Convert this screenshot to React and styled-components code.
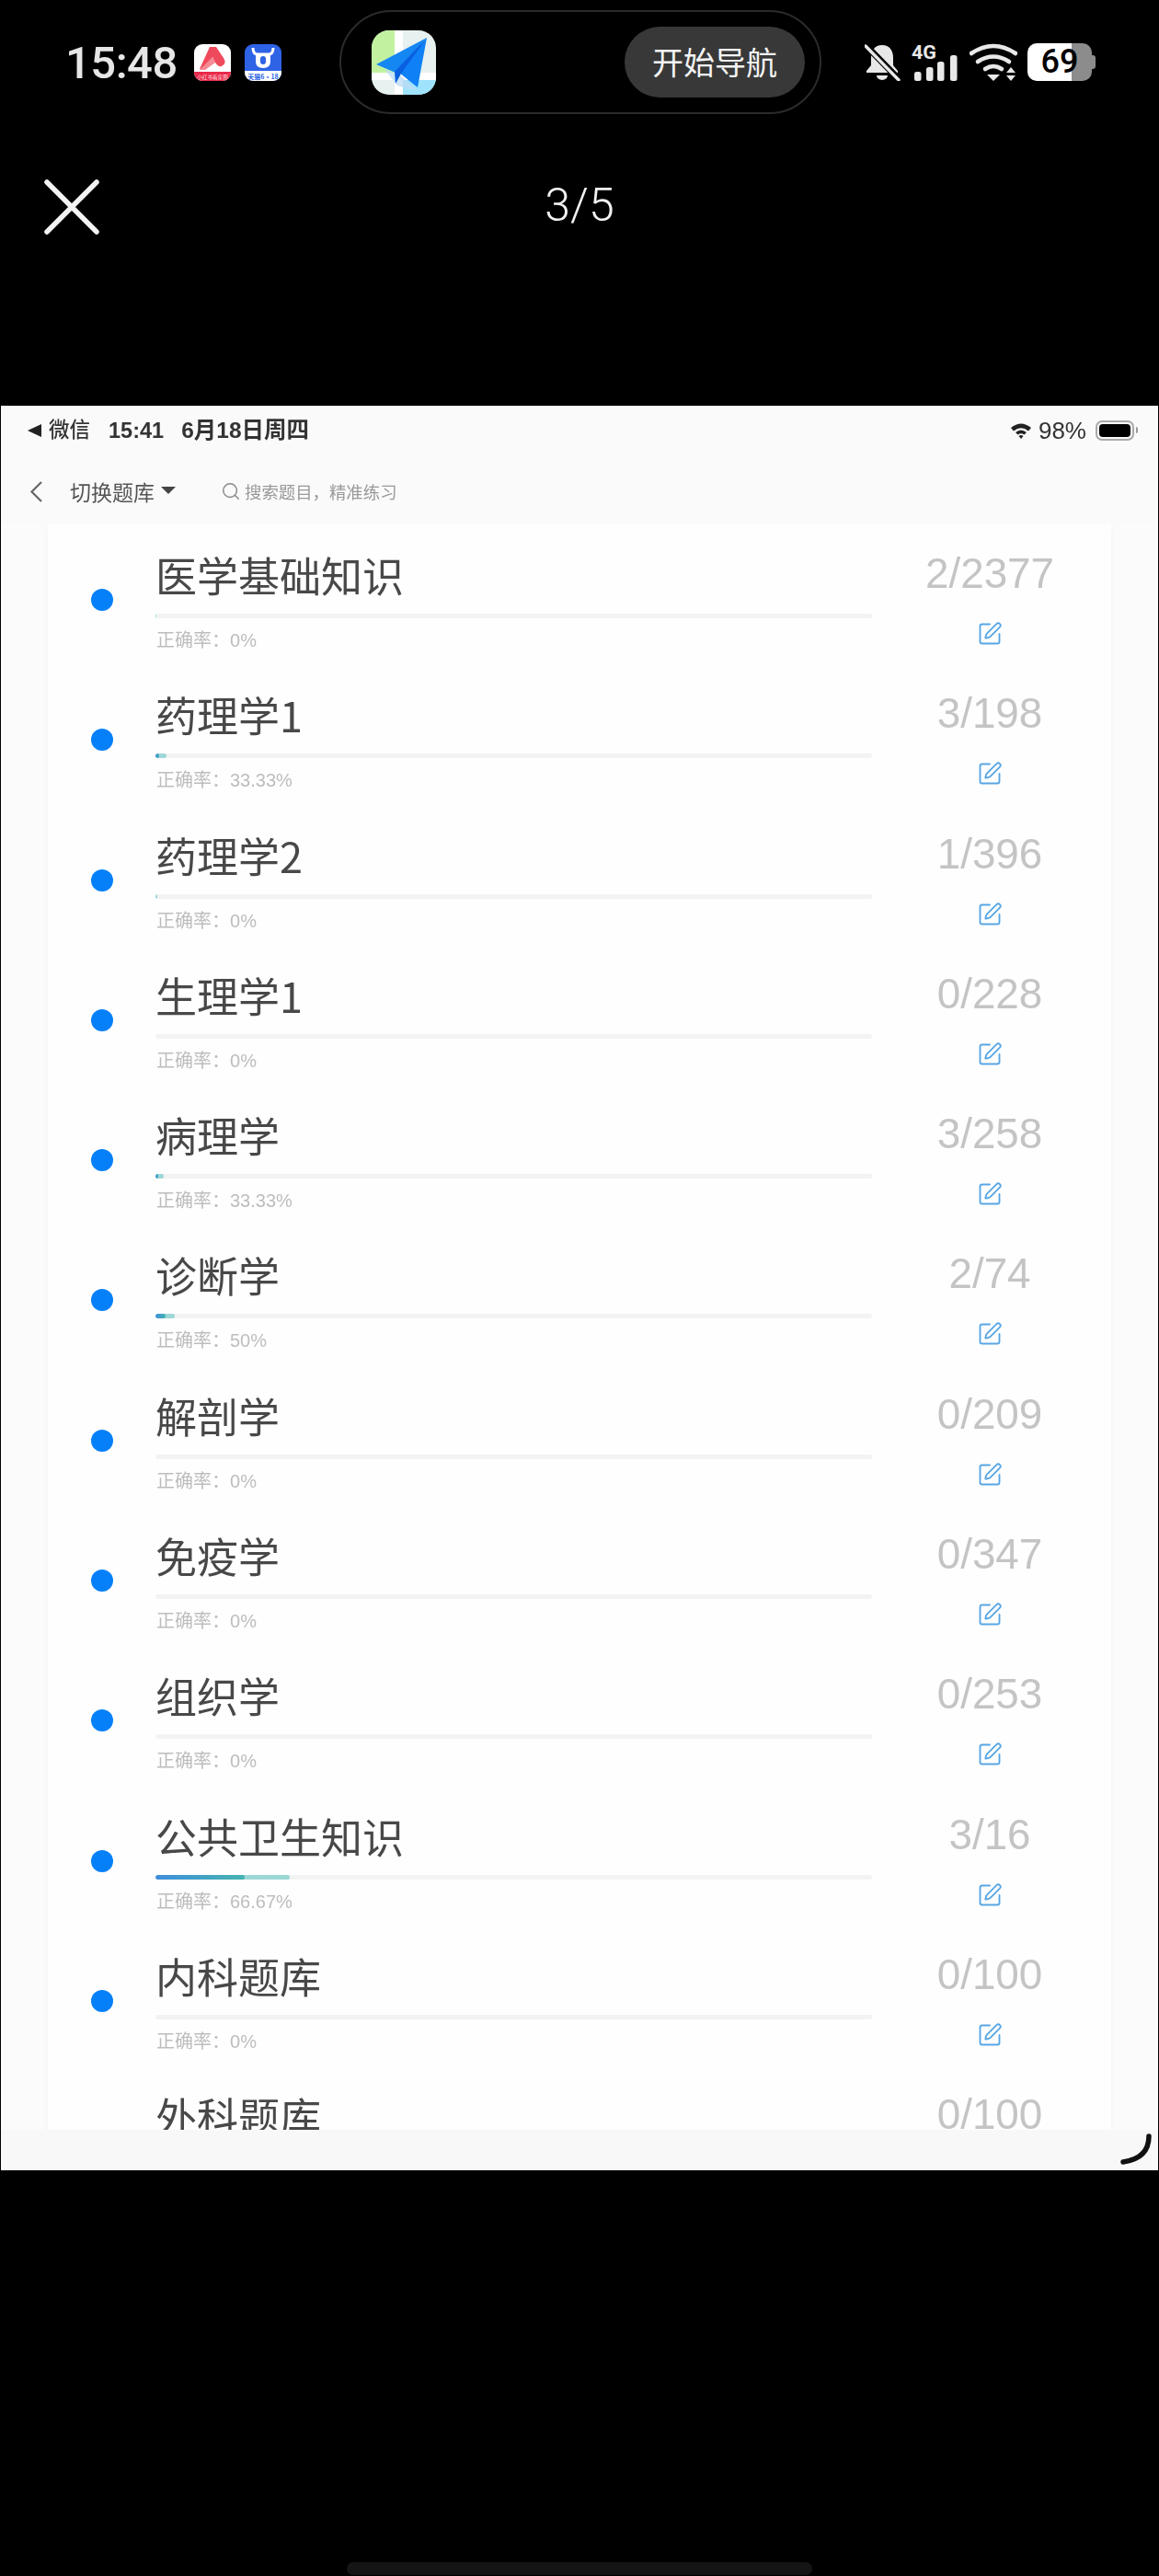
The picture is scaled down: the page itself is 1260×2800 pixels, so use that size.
import React from 'react';
import styled, { createGlobalStyle } from 'styled-components';
import { SquarePen, Search } from 'lucide-react';

const Global = createGlobalStyle`
  html, body { margin: 0; padding: 0; background: #000; }
  * { box-sizing: border-box; }
`;

const cjk = `"Noto Sans CJK SC", sans-serif`;
const latin = `"Liberation Sans", "Noto Sans CJK SC", sans-serif`;

const Page = styled.div`
  width: 1260px;
  height: 2800px;
  background: #000;
  display: flex;
  flex-direction: column;
  overflow: hidden;
`;

const StatusBar = styled.div`
  height: 124px;
  padding: 11px 0 0 71px;
  display: flex;
  align-items: flex-start;
`;

const Clock = styled.div`
  width: 120px;
  margin-top: 31px;
  font: 500 49px/54px Roboto, sans-serif;
  letter-spacing: -0.5px;
  color: #e6e6e6;
  white-space: nowrap;
`;

const AppBadges = styled.div`
  display: flex;
  gap: 15px;
  margin: 37px 0 0 20px;
`;

const Badge = styled.svg`
  width: 40px;
  height: 40px;
  display: block;
`;

const Island = styled.div`
  width: 524px;
  height: 113px;
  margin-left: 63px;
  border: 2px solid #2b2b2b;
  border-radius: 57px;
  display: flex;
  align-items: center;
  justify-content: space-between;
  padding: 0 15px 0 33px;
`;

const MapIcon = styled.svg`
  width: 70px;
  height: 70px;
  display: block;
`;

const NavButton = styled.div`
  width: 196px;
  height: 77px;
  margin-right: 1px;
  border-radius: 39px;
  background: #383838;
  color: #f4f4f4;
  font: 400 34px/75px ${cjk};
  text-align: center;
`;

const Indicators = styled.div`
  display: flex;
  align-items: center;
  height: 41px;
  margin: 36px 0 0 47px;
`;

const IconSvg = styled.svg`
  display: block;
  height: 41px;
  width: ${(p) => p.$w}px;
  margin-right: ${(p) => p.$gap}px;
`;

const Battery = styled.div`
  position: relative;
  width: 70px;
  height: 41px;
  border-radius: 10px;
  background: linear-gradient(90deg, #fff 0 48px, #8c8c8c 48px 100%);
  color: #000;
  font: 500 36px/41px Roboto, sans-serif;
  text-align: center;
  &::after {
    content: '';
    position: absolute;
    right: -4px;
    top: 13px;
    width: 4px;
    height: 15px;
    border-radius: 0 3px 3px 0;
    background: #8c8c8c;
  }
`;

const ViewerBar = styled.div`
  height: 317px;
  padding-top: 71px;
  display: grid;
  grid-template-columns: 1fr auto 1fr;
  align-items: start;
`;

const CloseIcon = styled.svg`
  width: 60px;
  height: 60px;
  margin-left: 48px;
  display: block;
`;

const PageCount = styled.div`
  font: 300 50px/56px Roboto, sans-serif;
  color: #f2f2f2;
`;

const Screen = styled.div`
  height: 1918px;
  margin: 0 1px;
  background: #fbfbfb;
  display: flex;
  flex-direction: column;
  position: relative;
  overflow: hidden;
  filter: blur(0.55px);
`;

const PhoneStatus = styled.div`
  height: 54px;
  padding: 0 0 0 29px;
  display: flex;
  align-items: center;
  background: #fafafa;
  color: #333;
  font: 500 22.5px/28px ${latin};
`;

const BackTriangle = styled.span`
  width: 0;
  height: 0;
  border-style: solid;
  border-width: 7.5px 15px 7.5px 0;
  border-color: transparent #222 transparent transparent;
  margin-right: 8px;
`;

const PhoneTime = styled.span`
  margin-left: 20px;
  font-size: 23.5px;
  font-weight: 700;
`;

const PhoneDate = styled.span`
  margin-left: 19px;
  font-size: 24.5px;
  font-weight: 700;
`;

const PhoneRight = styled.div`
  margin-left: auto;
  margin-right: 26px;
  display: flex;
  align-items: center;
  gap: 7px;
  font: 400 26px/28px ${latin};
  color: #333;
`;

const PhoneBattery = styled.div`
  position: relative;
  width: 42px;
  height: 22px;
  margin-left: 3px;
  border: 2px solid #aaa;
  border-radius: 7px;
  padding: 2px;
  &::before {
    content: '';
    display: block;
    height: 100%;
    border-radius: 4px;
    background: #000;
  }
  &::after {
    content: '';
    position: absolute;
    right: -6px;
    top: 5px;
    width: 2px;
    height: 7px;
    background: #999;
    border-radius: 0 2px 2px 0;
  }
`;

const NavBar = styled.div`
  height: 75px;
  padding: 3px 0 0 31px;
  display: flex;
  align-items: center;
  background: #fafafa;
`;

const NavLabel = styled.span`
  margin-left: 29px;
  font: 400 23px/30px ${cjk};
  color: #555;
`;

const Caret = styled.span`
  width: 0;
  height: 0;
  margin-left: 7px;
  margin-top: -2px;
  border-style: solid;
  border-width: 8px 8px 0 8px;
  border-color: #444 transparent transparent transparent;
`;

const SearchBox = styled.div`
  margin-left: 49px;
  display: flex;
  align-items: center;
  gap: 4px;
  font: 400 18.4px/26px ${cjk};
  color: #999;
`;

const List = styled.div`
  flex: 1;
  min-height: 0;
  overflow: hidden;
  padding: 0 51px;
`;

const Card = styled.div`
  background: #fefefe;
  padding-top: 30px;
  box-shadow: 0 0 8px rgba(0, 0, 0, 0.035);
`;

const Row = styled.div`
  height: 152.3px;
  display: grid;
  grid-template-columns: 117px 779px 256px;
  align-items: start;
`;

const Dot = styled.span`
  display: block;
  width: 24px;
  height: 24px;
  margin: 40px 0 0 47px;
  border-radius: 50%;
  background: #0580f8;
`;

const Main = styled.div`
  display: flex;
  flex-direction: column;
`;

const Title = styled.div`
  font: 400 45px/50px ${cjk};
  color: #484848;
  white-space: nowrap;
`;

const Track = styled.div`
  position: relative;
  height: 5px;
  margin-top: 17px;
  border-radius: 3px;
  background: #f3f3f3;
  overflow: hidden;
`;

const Done = styled.div`
  position: absolute;
  left: 0;
  top: 0;
  bottom: 0;
  border-radius: 3px;
  background: linear-gradient(90deg, #a4d6e0, #9ad8d4);
`;

const Correct = styled.div`
  position: absolute;
  left: 0;
  top: 0;
  bottom: 0;
  border-radius: 3px;
  background: linear-gradient(90deg, #3f8edb, #46b4b2);
`;

const Rate = styled.div`
  margin: 12px 0 0 1px;
  font: 400 20px/24px ${latin};
  color: #bdbdbd;
`;

const Side = styled.div`
  margin-top: -2px;
  display: flex;
  flex-direction: column;
  align-items: center;
`;

const Count = styled.div`
  font: 400 45.8px/52px ${latin};
  color: #c4c4c4;
`;

const EditButton = styled.div`
  margin-top: 25px;
  color: #58a6e4;
  line-height: 0;
`;

const BottomBar = styled.div`
  height: 44px;
  flex: none;
  background: #f8f8f8;
`;

const Spinner = styled.svg`
  position: absolute;
  right: 6px;
  bottom: 5px;
  width: 36px;
  height: 36px;
`;

const HomeIndicator = styled.div`
  width: 506px;
  height: 14px;
  margin: auto auto 1px;
  border-radius: 7px;
  background: #151515;
`;

const subjects = [
  { name: '医学基础知识', done: 2, total: 2377, rate: 0 },
  { name: '药理学1', done: 3, total: 198, rate: 33.33 },
  { name: '药理学2', done: 1, total: 396, rate: 0 },
  { name: '生理学1', done: 0, total: 228, rate: 0 },
  { name: '病理学', done: 3, total: 258, rate: 33.33 },
  { name: '诊断学', done: 2, total: 74, rate: 50 },
  { name: '解剖学', done: 0, total: 209, rate: 0 },
  { name: '免疫学', done: 0, total: 347, rate: 0 },
  { name: '组织学', done: 0, total: 253, rate: 0 },
  { name: '公共卫生知识', done: 3, total: 16, rate: 66.67 },
  { name: '内科题库', done: 0, total: 100, rate: 0 },
  { name: '外科题库', done: 0, total: 100, rate: 0 },
];

const RedBadge = () => (
  <Badge viewBox="0 0 40 40">
    <defs>
      <clipPath id="rb"><rect width="40" height="40" rx="9" /></clipPath>
    </defs>
    <g clipPath="url(#rb)">
      <rect width="40" height="40" fill="#fff" />
      <path d="M6 27 L17 3 H24 L32 15 Q36 21 30 24 Q26 25 23 20 L20 14 L13 27 Z" fill="#ef4a5c" />
      <path d="M20 14 L23 20 L12 28 H6 Z" fill="#f58a94" />
      <rect y="30" width="40" height="10" fill="#e9294a" />
      <text x="20" y="37.5" fontSize="5.6" fill="#ffd5da" textAnchor="middle" fontFamily="Noto Sans CJK SC">小红书看家圈</text>
    </g>
  </Badge>
);

const BlueBadge = () => (
  <Badge viewBox="0 0 40 40">
    <defs>
      <clipPath id="bb"><rect width="40" height="40" rx="9" /></clipPath>
    </defs>
    <g clipPath="url(#bb)">
      <rect width="40" height="40" fill="#2e63e6" />
      <rect y="29" width="40" height="11" fill="#fff" />
      <path d="M9 4 Q9 10 13 11 H27 Q31 10 31 4" fill="none" stroke="#fff" strokeWidth="3" />
      <path d="M12 10 H28 V19 Q28 26 20 26 Q12 26 12 19 Z" fill="#fff" />
      <rect x="17" y="13" width="6" height="9" rx="3" fill="#2e63e6" />
      <text x="20" y="37.6" fontSize="7" fontWeight="700" fill="#2e63e6" textAnchor="middle" fontFamily="Noto Sans CJK SC">天猫6·18</text>
    </g>
  </Badge>
);

const Amap = () => (
  <MapIcon viewBox="0 0 70 70">
    <defs>
      <clipPath id="am"><rect width="70" height="70" rx="19" /></clipPath>
    </defs>
    <g clipPath="url(#am)">
      <rect width="70" height="70" fill="#e7f1f0" />
      <rect width="25" height="46" fill="#c2f2a0" />
      <rect x="25" width="9" height="70" fill="#fff" />
      <rect y="46" width="70" height="8" fill="#fff" />
      <rect x="34" y="54" width="36" height="16" fill="#9fe2fb" />
      <polygon points="14,42 28,60 50,66 30,48" fill="#bcdcf5" opacity=".8" />
      <polygon points="60,8 5,37 26,46" fill="#1487f2" />
      <polygon points="60,8 30,46 50,62" fill="#0f80f5" />
      <polygon points="60,8 25,45 26,58 32,47" fill="#0a5fe0" />
    </g>
  </MapIcon>
);

const Bell = () => (
  <IconSvg $w={39} $gap={12} viewBox="0 0 39 41">
    <path d="M19 2c-8 0-12 6-12 14v8l-5 6v2h34v-2l-5-6v-8C31 8 27 2 19 2z" fill="#e8e8e8" />
    <path d="M13 35a6 5 0 0 0 12 0z" fill="#e8e8e8" />
    <path d="M1 2 L37 39" stroke="#000" strokeWidth="7" />
    <path d="M1 3 L37 40" stroke="#e8e8e8" strokeWidth="3.4" strokeLinecap="round" />
  </IconSvg>
);

const Signal = () => (
  <IconSvg $w={50} $gap={13} viewBox="0 0 50 41">
    <text x="0" y="17" fontSize="20" fontWeight="700" fontFamily="Roboto" fill="#e8e8e8" textLength="27" lengthAdjust="spacingAndGlyphs">4G</text>
    <rect x="3" y="31" width="7.5" height="10" rx="2.5" fill="#e8e8e8" />
    <rect x="16" y="26" width="7.5" height="15" rx="2.5" fill="#e8e8e8" />
    <rect x="28" y="20" width="7.5" height="21" rx="2.5" fill="#e8e8e8" />
    <rect x="42" y="13" width="7.5" height="28" rx="2.5" fill="#e8e8e8" />
  </IconSvg>
);

const Wifi = () => (
  <IconSvg $w={52} $gap={11} viewBox="0 0 52 41">
    <g fill="none" stroke="#e8e8e8" strokeWidth="4.6" strokeLinecap="round">
      <path d="M2 11 Q26 -5 50 11" />
      <path d="M9 20 Q26 9 43 20" />
      <path d="M17 28 Q26 22 35 28" />
    </g>
    <polygon points="19,34 33,34 26,41" fill="#e8e8e8" />
    <polygon points="40,32 50,32 45,26" fill="#e8e8e8" />
    <polygon points="40,35 50,35 45,41" fill="#e8e8e8" />
  </IconSvg>
);

export default function App() {
  return (
    <Page>
      <Global />
      <StatusBar>
        <Clock>15:48</Clock>
        <AppBadges>
          <RedBadge />
          <BlueBadge />
        </AppBadges>
        <Island>
          <Amap />
          <NavButton>开始导航</NavButton>
        </Island>
        <Indicators>
          <Bell />
          <Signal />
          <Wifi />
          <Battery>69</Battery>
        </Indicators>
      </StatusBar>

      <ViewerBar>
        <CloseIcon viewBox="0 0 60 60">
          <path d="M3 3 L57 57 M57 3 L3 57" stroke="#f4f4f4" strokeWidth="5.5" strokeLinecap="round" />
        </CloseIcon>
        <PageCount>3/5</PageCount>
      </ViewerBar>

      <Screen>
        <PhoneStatus>
          <BackTriangle />
          微信
          <PhoneTime>15:41</PhoneTime>
          <PhoneDate>6月18日周四</PhoneDate>
          <PhoneRight>
            <svg width="24" height="18" viewBox="0 0 24 18">
              <path d="M1 6 Q12 -3 23 6 L20 9.5 Q12 3 4 9.5 Z M6 11 Q12 6 18 11 L15.5 13.5 Q12 11 8.5 13.5 Z M9.5 15 Q12 13 14.5 15 L12 18 Z" fill="#222" />
            </svg>
            98%
            <PhoneBattery />
          </PhoneRight>
        </PhoneStatus>
        <NavBar>
          <svg width="15" height="25" viewBox="0 0 15 25">
            <path d="M13 2 L2.5 12.5 L13 23" fill="none" stroke="#666" strokeWidth="2.2" />
          </svg>
          <NavLabel>切换题库</NavLabel>
          <Caret />
          <SearchBox>
            <Search size={22} strokeWidth={1.6} color="#888" />
            搜索题目，精准练习
          </SearchBox>
        </NavBar>

        <List>
          <Card>
            {subjects.map((s) => {
              const donePct = (s.done / s.total) * 100;
              return (
                <Row key={s.name}>
                  <Dot />
                  <Main>
                    <Title>{s.name}</Title>
                    <Track>
                      <Done style={{ width: `${donePct}%` }} />
                      <Correct style={{ width: `${(donePct * s.rate) / 100}%` }} />
                    </Track>
                    <Rate>正确率：{s.rate}%</Rate>
                  </Main>
                  <Side>
                    <Count>{s.done}/{s.total}</Count>
                    <EditButton>
                      <SquarePen size={28} strokeWidth={1.6} />
                    </EditButton>
                  </Side>
                </Row>
              );
            })}
          </Card>
        </List>
        <BottomBar />
        <Spinner viewBox="0 0 36 36">
          <path d="M32 4 Q32 28 4 32" fill="none" stroke="#111" strokeWidth="5.5" strokeLinecap="round" />
        </Spinner>
      </Screen>

      <HomeIndicator />
    </Page>
  );
}
